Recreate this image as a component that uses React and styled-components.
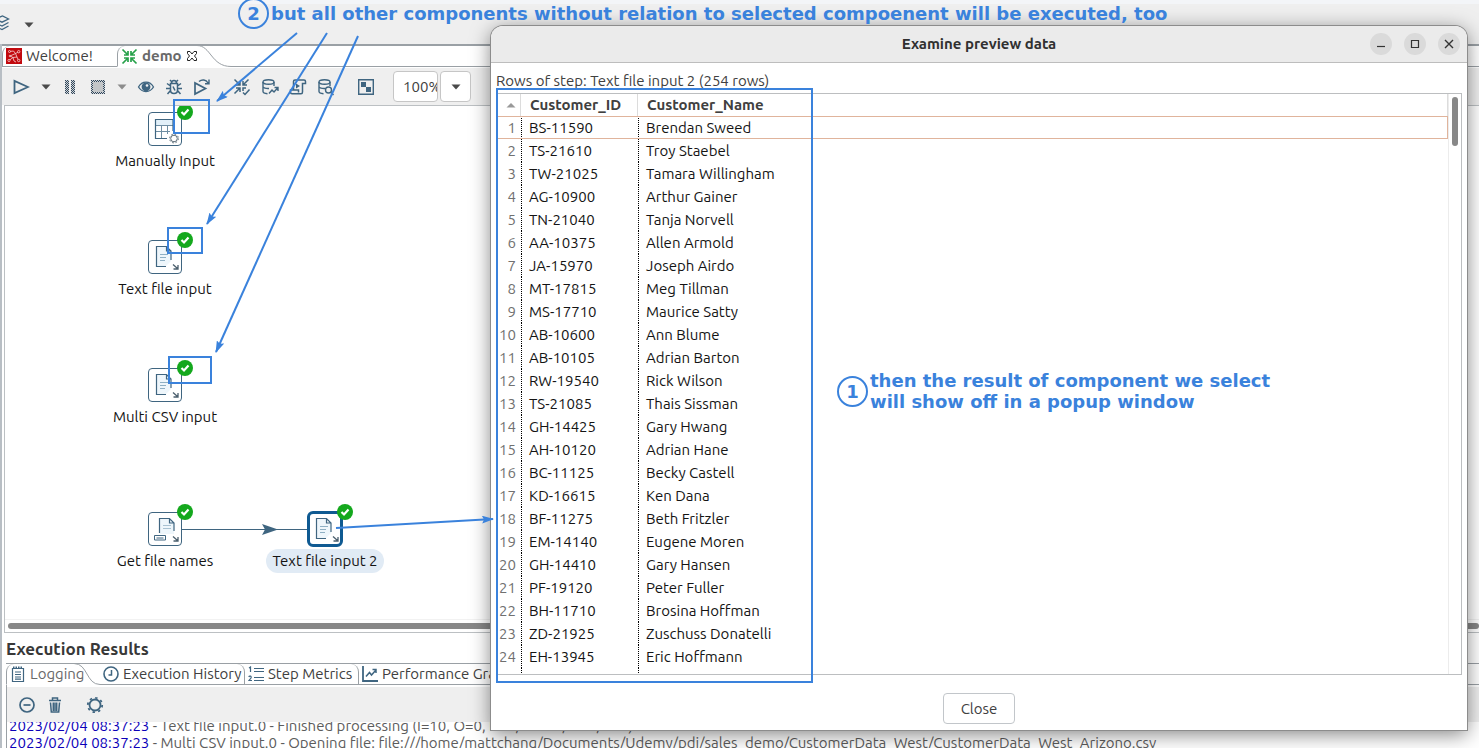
import React from 'react';
import styled, { createGlobalStyle, css } from 'styled-components';

const ink = '#3f6580';
const note = '#3a82dc';
const line = '#9aa0a5';

const GlobalStyle = createGlobalStyle`
  *, *::before, *::after { box-sizing: border-box; }
  body {
    margin: 0;
    font-family: Ubuntu, "Noto Sans", sans-serif;
    font-size: 15px;
    line-height: 20px;
    color: #404040;
    background: #efefef;
  }
  button, input { font: inherit; color: inherit; }
  button { border: 0; padding: 0; background: none; }
`;

const Page = styled.div`
  position: relative;
  display: flex;
  flex-direction: column;
  height: 100vh;
  overflow: hidden;
`;

const MainBar = styled.header`
  flex: none;
  display: flex;
  align-items: center;
  gap: 12px;
  height: 44px;
  padding-bottom: 2px;
  border-top: 4px solid #f3f5f8;
`;

const Workbench = styled.main`
  flex: 1;
  min-height: 0;
  display: flex;
  flex-direction: column;
  border-left: 2px solid #b8bec4;
  background: #fff;
`;

const TabBar = styled.div`
  flex: none;
  display: flex;
  height: ${p => (p.$small ? 22 : 23)}px;
  border-top: ${p => (p.$small ? 1 : 2)}px solid ${line};
  background: #fff;
`;

const Tab = styled.button`
  flex: none;
  display: flex;
  align-items: center;
  gap: 4px;
  width: ${p => p.$width}px;
  padding-left: 3px;
  white-space: nowrap;
  color: ${p => (p.$muted ? '#696969' : '#404040')};
  font-weight: ${p => (p.$bold ? 700 : 400)};
  border-bottom: 1px solid ${p => (p.$open ? 'transparent' : line)};
  & > svg { flex: none; }
  ${p => p.$first && css`
    border-left: 1px solid ${line};
    border-top-left-radius: 8px;
  `}
  ${p => p.$split && css`
    border-right: 1px solid ${line};
    border-top-right-radius: 8px;
  `}
`;

const TabFill = styled.div`
  flex: 1;
  border-bottom: 1px solid ${line};
`;

const Swoosh = styled.svg`
  flex: none;
  margin-top: -1px;
  overflow: visible;
`;

const Toolbar = styled.div`
  flex: none;
  display: flex;
  align-items: center;
  height: ${p => p.$height}px;
  padding-left: ${p => p.$inset}px;
  margin-top: ${p => (p.$below || 0)}px;
  background: #efefef;
`;

const ToolButton = styled.button`
  flex: none;
  display: flex;
  align-items: center;
  justify-content: center;
  width: ${p => p.$width || 28}px;
  height: 28px;
  margin-left: ${p => p.$gap || 0}px;
`;

const ZoomInput = styled.input`
  width: 45px;
  height: 31px;
  margin-left: 13px;
  padding: 0 0 0 9px;
  border: 1px solid #c6c6c6;
  border-radius: 4px;
  background: #fff;
`;

const ZoomButton = styled.button`
  display: flex;
  align-items: center;
  justify-content: center;
  width: 31px;
  height: 31px;
  margin-left: 2px;
  border: 1px solid #c6c6c6;
  border-radius: 4px;
  background: #fff;
`;

const Canvas = styled.section`
  flex: none;
  position: relative;
  height: 528px;
  margin-left: 2px;
  border: 1px solid #bcc0c3;
  border-right: 0;
  overflow: hidden;
  background: #fff;
`;

const Hop = styled.svg`
  position: absolute;
  left: 177px;
  top: 415px;
`;

const Step = styled.div`
  position: absolute;
  left: ${p => p.$x}px;
  top: ${p => p.$y}px;
  width: 120px;
  display: flex;
  flex-direction: column;
  align-items: center;
  gap: ${p => (p.$selected ? 2 : 3)}px;
`;

const StepBox = styled.div`
  position: relative;
  width: ${p => (p.$selected ? 36 : 34)}px;
  height: ${p => (p.$selected ? 36 : 34)}px;
  display: flex;
  align-items: center;
  justify-content: center;
  border: ${p => (p.$selected ? '3px solid #0f5a92' : `1px solid ${ink}`)};
  border-radius: ${p => (p.$selected ? 6 : 4)}px;
  background: #fff;
  & > svg { flex: none; }
`;

const Done = styled.svg`
  position: absolute;
  right: ${p => (p.$selected ? -13 : -12)}px;
  top: ${p => (p.$selected ? -10 : -9)}px;
`;

const StepName = styled.span`
  padding: 2px 6px;
  border-radius: 12px;
  white-space: nowrap;
  color: #141414;
  background: ${p => (p.$selected ? '#e1ebf5' : 'transparent')};
`;

const ScrollTrack = styled.div`
  position: absolute;
  left: 0;
  right: 0;
  bottom: 0;
  height: 13px;
  padding: 3px 0 3px 3px;
  border-top: 1px solid #f2f2f2;
`;

const ScrollThumb = styled.div`
  height: 6px;
  border-radius: 3px;
  background: #888;
`;

const PanelTitle = styled.h2`
  flex: none;
  margin: 0;
  padding: 6px 4px 4px;
  font-size: 17px;
  line-height: 20px;
  color: #383838;
`;

const Panel = styled.section`
  flex: 1;
  min-height: 0;
  display: flex;
  flex-direction: column;
  margin-left: 4px;
`;

const PanelBody = styled.div`
  flex: 1;
  min-height: 0;
  display: flex;
  flex-direction: column;
  border-left: 1px solid ${line};
`;

const Log = styled.div`
  flex: 1;
  min-height: 0;
  overflow: hidden;
  padding-left: 2px;
  color: #5c5c5c;
`;

const LogLines = styled.div`
  margin-top: -5px;
`;

const LogLine = styled.p`
  margin: 0;
  line-height: 17px;
  white-space: nowrap;
`;

const Stamp = styled.time`
  color: #0c00b8;
`;

const Dialog = styled.section`
  position: absolute;
  left: 491px;
  right: 12px;
  top: 26px;
  display: flex;
  flex-direction: column;
  border-radius: 12px 12px 0 0;
  background: #fff;
  box-shadow: 0 0 0 1px #8c8c8c, 0 4px 20px rgba(0, 0, 0, 0.5);
`;

const TitleBar = styled.header`
  position: relative;
  display: flex;
  align-items: center;
  justify-content: center;
  height: 37px;
  border-bottom: 1px solid #bdbdbd;
  border-radius: 12px 12px 0 0;
  background: #ebebeb;
`;

const DialogTitle = styled.h1`
  margin: 0;
  font-size: 15px;
  line-height: 20px;
  color: #303030;
`;

const WindowButtons = styled.div`
  position: absolute;
  right: 7px;
  display: flex;
  gap: 12px;
`;

const RoundButton = styled.button`
  display: flex;
  align-items: center;
  justify-content: center;
  width: 22px;
  height: 22px;
  border-radius: 50%;
  background: #dadada;
`;

const Caption = styled.p`
  margin: 0;
  padding: 8px 5px 2px;
`;

const GridFrame = styled.div`
  display: flex;
  height: 582px;
  margin: 0 5px;
  border: 1px solid #bcbec0;
  overflow: hidden;
`;

const GridScroll = styled.div`
  width: 13px;
  padding: 3px;
  border-left: 1px solid #ececec;
`;

const GridThumb = styled.div`
  width: 6px;
  height: 49px;
  border-radius: 3px;
  background: #888;
`;

const Grid = styled.table`
  flex: 1;
  width: 100%;
  height: max-content;
  table-layout: fixed;
  border-collapse: separate;
  border-spacing: 0;
`;

const HeadCell = styled.th`
  width: ${p => (p.$width ? `${p.$width}px` : 'auto')};
  height: 22px;
  padding: 0 0 0 9px;
  border-right: 1px solid #dcdcdc;
  text-align: left;
  font-weight: 700;
`;

const SortIcon = styled.svg`
  display: block;
`;

const Row = styled.tr`
  ${p => p.$current && css`
    outline: 1px solid #e0b49c;
    outline-offset: -1px;
  `}
`;

const Cell = styled.td`
  height: 23px;
  padding: 0 0 0 7px;
  border-left: 1px dotted #000;
  white-space: nowrap;
  color: #141414;
`;

const IndexCell = styled(Cell)`
  padding: 0 5px 0 0;
  border-left: 0;
  text-align: right;
  color: #707070;
`;

const Footer = styled.footer`
  display: flex;
  justify-content: center;
  padding: 18px 0 6px;
`;

const CloseButton = styled.button`
  width: 72px;
  height: 31px;
  border: 1px solid #c2c6ca;
  border-radius: 4px;
  background: #fff;
`;

const Marks = styled.svg`
  position: absolute;
  left: 0;
  top: 0;
  width: 100%;
  height: 100%;
  pointer-events: none;
`;

const Note = styled.div`
  position: absolute;
  left: ${p => p.$x}px;
  top: ${p => p.$y}px;
  display: flex;
  align-items: ${p => (p.$top ? 'flex-start' : 'center')};
  gap: 2px;
  font: 700 18px/21px "DejaVu Sans", sans-serif;
  color: ${note};
  white-space: nowrap;
`;

const NoteNumber = styled.span`
  display: flex;
  align-items: center;
  justify-content: center;
  width: 31px;
  height: 31px;
  border: 2px solid ${note};
  border-radius: 50%;
`;

const Icon = ({ size = 18, children, ...rest }) => (
  <svg width={size} height={size} viewBox={`0 0 ${size} ${size}`} fill="none" stroke={ink} strokeWidth="1.5" aria-hidden="true" {...rest}>
    {children}
  </svg>
);

const Caret = ({ fill = '#4a4a4a' }) => (
  <svg width="10" height="6" viewBox="0 0 10 6" aria-hidden="true"><path d="M0.5 0.5h9L5 5.5z" fill={fill} /></svg>
);

const LayersIcon = () => (
  <svg width="12" height="18" viewBox="6 0 12 18" fill="none" stroke={ink} strokeWidth="1.3" aria-hidden="true">
    <path d="M1 5l7.500-3 6 3-6.500 3.200zM0 8.500l8 3.500 6.500-3.500M0 12l8 3.500 6.500-3.500" />
  </svg>
);

const PlayIcon = () => <Icon><path d="M2.500 3v12L16 9z" strokeWidth="1.8" /></Icon>;

const Dither = () => (
  <defs>
    <pattern id="dither" width="2" height="2" patternUnits="userSpaceOnUse">
      <rect width="2" height="2" fill="#cdd3d8" stroke="none" />
      <path d="M0 0h1v1H0zM1 1h1v1H1z" fill="#33475a" stroke="none" />
    </pattern>
  </defs>
);

const PauseIcon = () => (
  <Icon stroke="none"><Dither /><path d="M4 2h4v14H4zM10 2h4v14h-4z" fill="url(#dither)" /></Icon>
);

const StopIcon = () => (
  <Icon stroke="none">
    <path d="M2 2h14v14H2z" fill="url(#dither)" />
    <path d="M4 4h10v10H4z" fill="#c3c6c8" />
  </Icon>
);

const EyeIcon = () => (
  <Icon>
    <path d="M1.500 9C5 2.500 13 2.500 16.500 9 13 15 5 15 1.500 9z" strokeWidth="1.300" />
    <circle cx="9" cy="8.800" r="4.400" fill={ink} stroke="none" />
    <circle cx="10" cy="7.500" r="1.300" fill="#efefef" stroke="none" />
  </Icon>
);

const BugIcon = () => (
  <Icon strokeWidth="1.5">
    <path d="M5.500 5.500h7v6.500c0 2-1.500 3.500-3.500 3.500S5.500 14 5.500 12zM6.500 5.500c0-2 1-3 2.500-3s2.500 1 2.500 3M5 2l2 2M13 2l-2 2M5.500 8L2 5.500M5.500 10.500H1M5.500 12.500L2.500 16M12.500 8L16 5.500M12.500 10.500H17M12.500 12.500l3 3.500M8 8.500l2 4" />
  </Icon>
);

const ReplayIcon = () => (
  <Icon><path d="M2 5v11L12.500 10.500z" strokeWidth="1.700" /><path d="M6 3.500c3-2.500 7-2 9 1.500M16 1.500V5.700H12" strokeWidth="1.400" /></Icon>
);

const InwardArrows = () => (
  <path d="M1.500 1.500L7 7M7 3v4H3M15.500 1.500L10 7M10 3v4h4M1.500 15.500L7 10M3 10h4v4" />
);

const VerifyIcon = () => (
  <Icon strokeWidth="1.5"><InwardArrows /><path d="M10 13v-3h3M10 14.500l2 2 4.500-5" /></Icon>
);

const Drum = () => (
  <>
    <ellipse cx="7.500" cy="4" rx="5.500" ry="2.200" />
    <path d="M2 4v9.500c0 1.200 2 2 4.500 2.200M13 4v4M2 8.500c0 1.400 3 2.200 6 2" />
  </>
);

const DbImpactIcon = () => (
  <Icon strokeWidth="1.4"><Drum /><path d="M8 15.500l3-3.500 2 2 4-4.500M13.500 9.500H17V13" /></Icon>
);

const DbSearchIcon = () => (
  <Icon strokeWidth="1.4"><Drum /><circle cx="11.500" cy="12" r="3" /><path d="M13.500 14l3 3" /></Icon>
);

const ScriptIcon = () => (
  <Icon strokeWidth="1.5">
    <path d="M4.500 12V3.500c0-1 .6-1.500 1.500-1.500h9c1 0 1.500.6 1.500 1.500V5.500h-3V14c0 1-.6 1.800-1.500 1.800H3c-1 0-1.500-.8-1.500-1.800v-2h8v2.500" />
    <path d="M7 5.500v5l4-2.500z" fill={ink} stroke="none" />
  </Icon>
);

const ResultsIcon = () => (
  <Icon strokeWidth="1.4">
    <path d="M1.700 1.700h14.600v14.600H1.700z" />
    <path d="M4 4h5v5H4zM9 9h5v5H9z" fill={ink} stroke="none" />
  </Icon>
);

const WelcomeIcon = () => (
  <svg width="16" height="16" viewBox="0 0 16 16" aria-hidden="true">
    <path d="M0 0h16v16H0z" fill="#c2090e" />
    <path d="M3.500 3.500l4-.5 2 2.500 3-1.500M4 8l5.500-2.500L11 9l1.500 3.500M4 8l3 1.500-4 3M7 9.500L11 9M7 9.500l1 3.500 2 1" fill="none" stroke="#f6d5d5" strokeWidth=".8" />
    <g fill="#c2090e" stroke="#f6d5d5" strokeWidth=".8"><circle cx="3.500" cy="3.500" r="1" /><circle cx="12.700" cy="3.700" r="1.200" /><circle cx="3" cy="12.500" r="1.100" /><circle cx="12.700" cy="12.500" r="1.200" /><circle cx="4" cy="8" r=".8" /></g>
  </svg>
);

const TransformIcon = () => (
  <svg width="17" height="17" viewBox="0 0 17 17" fill="none" stroke="#27a14a" strokeWidth="1.7" aria-hidden="true">
    <InwardArrows /><path d="M15.500 15.500L10 10M14 10h-4v4" />
  </svg>
);

const TabCloseIcon = () => (
  <svg width="12" height="12" viewBox="0 0 12 12" fill="#fff" stroke="#222" aria-hidden="true">
    <path d="M1.500 1.500h2.500l2 2.500 2-2.500h2.500v2L8.500 6l2 2.500v2H8L6 8l-2 2.500H1.500v-2L3.500 6l-2-2.500z" />
  </svg>
);

const DocCorner = () => <path d="M25 24.500l4.500 4M30 25v4h-4.500" stroke="#4b5f6d" strokeWidth="1.300" />;

const FileDrawing = () => (
  <>
    <path d="M9 7h9l5 5v9l-5 5H9z" fill="#eef6fb" stroke="none" />
    <path d="M12 14.500h8M12 17.500h6M12 20.500h5" stroke="#8fb0c4" />
    <path d="M18 26.500H8.500V6.500h10l4.500 4.500V20M18.500 6.500V11H23" strokeWidth="1.200" />
    <DocCorner />
  </>
);

const stepDrawings = {
  table: (
    <>
      <path d="M8 8h17v5H8z" fill="#e2f0f9" stroke="none" />
      <path d="M8 19.500H22M13.500 13v13M19.500 13V22M8 13.500H25" stroke="#6f8ea3" />
      <path d="M19 26.500H7.500V7.500H25V19" strokeWidth="1.200" />
      <circle cx="26" cy="26.500" r="3.300" stroke="#5b6c78" />
      <circle cx="26" cy="26.500" r="4.400" stroke="#5b6c78" strokeDasharray="1.700 1.750" />
    </>
  ),
  file: <FileDrawing />,
  names: (
    <>
      <path d="M12 7h9l5 4v11H12z" fill="#eef6fb" stroke="none" />
      <path d="M15 13.500h8M15 16.500h8" stroke="#a9c2d2" />
      <path d="M11.500 21V6.500h10l4.500 4.500V19M21.500 6.500V11H26" strokeWidth="1.200" />
      <path d="M6.500 23.500h11v4.500h-11zM8.500 26h7" fill="#fff" />
      <DocCorner />
    </>
  ),
};

const steps = [
  { name: 'Manually Input', kind: 'table', x: 100, y: 6 },
  { name: 'Text file input', kind: 'file', x: 100, y: 134 },
  { name: 'Multi CSV input', kind: 'file', x: 100, y: 262 },
  { name: 'Get file names', kind: 'names', x: 100, y: 406 },
  { name: 'Text file input 2', kind: 'file', x: 260, y: 405, selected: true },
];

const customers = [
  ['BS-11590', 'Brendan Sweed'],
  ['TS-21610', 'Troy Staebel'],
  ['TW-21025', 'Tamara Willingham'],
  ['AG-10900', 'Arthur Gainer'],
  ['TN-21040', 'Tanja Norvell'],
  ['AA-10375', 'Allen Armold'],
  ['JA-15970', 'Joseph Airdo'],
  ['MT-17815', 'Meg Tillman'],
  ['MS-17710', 'Maurice Satty'],
  ['AB-10600', 'Ann Blume'],
  ['AB-10105', 'Adrian Barton'],
  ['RW-19540', 'Rick Wilson'],
  ['TS-21085', 'Thais Sissman'],
  ['GH-14425', 'Gary Hwang'],
  ['AH-10120', 'Adrian Hane'],
  ['BC-11125', 'Becky Castell'],
  ['KD-16615', 'Ken Dana'],
  ['BF-11275', 'Beth Fritzler'],
  ['EM-14140', 'Eugene Moren'],
  ['GH-14410', 'Gary Hansen'],
  ['PF-19120', 'Peter Fuller'],
  ['BH-11710', 'Brosina Hoffman'],
  ['ZD-21925', 'Zuschuss Donatelli'],
  ['EH-13945', 'Eric Hoffmann'],
];

const tools = [
  { label: 'Run', icon: <PlayIcon /> },
  { label: 'Run options', icon: <Caret />, width: 22 },
  { label: 'Pause', icon: <PauseIcon />, width: 26 },
  { label: 'Stop', icon: <StopIcon />, gap: 1 },
  { label: 'Stop options', icon: <Caret fill="#8c8c8c" />, width: 20 },
  { label: 'Preview', icon: <EyeIcon /> },
  { label: 'Debug', icon: <BugIcon /> },
  { label: 'Replay', icon: <ReplayIcon /> },
  { label: 'Verify', icon: <VerifyIcon />, gap: 12 },
  { label: 'Impact analysis', icon: <DbImpactIcon /> },
  { label: 'Generate SQL', icon: <ScriptIcon /> },
  { label: 'Explore database', icon: <DbSearchIcon /> },
  { label: 'Show results', icon: <ResultsIcon />, gap: 12 },
];

const logLines = [
  'Text file input.0 - Finished processing (I=10, O=0, R=1, W=10, U=0, E=0)',
  'Multi CSV input.0 - Opening file: file:///home/mattchang/Documents/Udemy/pdi/sales_demo/CustomerData_West/CustomerData_West_Arizono.csv',
];

function StepNode({ step }) {
  return (
    <Step $x={step.x} $y={step.y} $selected={step.selected}>
      <StepBox $selected={step.selected}>
        <svg width="34" height="34" viewBox="0 0 34 34" fill="none" stroke={ink} aria-hidden="true">{stepDrawings[step.kind]}</svg>
        <Done $selected={step.selected} width="16" height="16" viewBox="0 0 16 16" aria-hidden="true">
          <circle cx="8" cy="8" r="8" fill="#14a81d" />
          <path d="M4.500 8l2.500 2.500L11.500 5.500" fill="none" stroke="#fff" strokeWidth="2.200" />
        </Done>
      </StepBox>
      <StepName $selected={step.selected}>{step.name}</StepName>
    </Step>
  );
}

function PreviewDialog() {
  return (
    <Dialog role="dialog" aria-labelledby="dialog-title">
      <TitleBar>
        <DialogTitle id="dialog-title">Examine preview data</DialogTitle>
        <WindowButtons>
          <RoundButton aria-label="Minimize"><svg width="10" height="10"><path d="M1 7.500h8" stroke="#333" strokeWidth="1.200" /></svg></RoundButton>
          <RoundButton aria-label="Maximize"><svg width="10" height="10"><path d="M1.500 1.500h7v7h-7z" fill="none" stroke="#333" strokeWidth="1.200" /></svg></RoundButton>
          <RoundButton aria-label="Close window"><svg width="10" height="10"><path d="M1 1l8 8M9 1L1 9" stroke="#333" strokeWidth="1.400" /></svg></RoundButton>
        </WindowButtons>
      </TitleBar>
      <Caption>Rows of step: Text file input 2 (254 rows)</Caption>
      <GridFrame>
        <Grid>
          <thead>
            <tr>
              <HeadCell $width={24} aria-label="Row"><SortIcon width="10" height="6" viewBox="0 0 10 6"><path d="M0.500 5.500h9L5 1z" fill="#999" /></SortIcon></HeadCell>
              <HeadCell $width={117}>Customer_ID</HeadCell>
              <HeadCell>Customer_Name</HeadCell>
            </tr>
          </thead>
          <tbody>
            {customers.map(([id, name], i) => (
              <Row key={id} $current={i === 0}>
                <IndexCell>{i + 1}</IndexCell>
                <Cell>{id}</Cell>
                <Cell>{name}</Cell>
              </Row>
            ))}
            <Row><IndexCell /><Cell /><Cell /></Row>
          </tbody>
        </Grid>
        <GridScroll><GridThumb /></GridScroll>
      </GridFrame>
      <Footer><CloseButton>Close</CloseButton></Footer>
    </Dialog>
  );
}

export default function App() {
  return (
    <>
      <GlobalStyle />
      <Page>
        <MainBar>
          <LayersIcon />
          <button aria-label="Perspective options"><Caret /></button>
        </MainBar>
        <Workbench>
          <TabBar>
            <Tab $first $width={115}><WelcomeIcon />Welcome!</Tab>
            <Tab $first $open $bold $muted $width={83}><TransformIcon />demo<TabCloseIcon /></Tab>
            <Swoosh width="31" height="22" viewBox="0 0 31 22" fill="none" stroke={line}>
              <path d="M-3 .5c14 0 14 21 34 21" />
            </Swoosh>
            <TabFill />
          </TabBar>
          <Toolbar $height={37} $inset={5} $below={1}>
            {tools.map(t => (
              <ToolButton key={t.label} aria-label={t.label} $width={t.width} $gap={t.gap}>{t.icon}</ToolButton>
            ))}
            <ZoomInput aria-label="Zoom" defaultValue="100%" />
            <ZoomButton aria-label="Zoom levels"><Caret /></ZoomButton>
          </Toolbar>
          <Canvas>
            <Hop width="126" height="16" viewBox="0 0 126 16" aria-hidden="true">
              <path d="M0 8.500h126" stroke={ink} />
              <path d="M80 3l16 5.500L80 14l3-5.500z" fill={ink} />
            </Hop>
            {steps.map(s => <StepNode key={s.name} step={s} />)}
            <ScrollTrack><ScrollThumb /></ScrollTrack>
          </Canvas>
          <PanelTitle>Execution Results</PanelTitle>
          <Panel>
            <TabBar $small>
              <Tab $first $open $muted $width={80}>
                <Icon size={16}><path d="M2.500 2.500h11v13h-11zM5 6h6M5 8.500h6M5 11h6M5 13.200h6" strokeWidth="1.200" /><path d="M3 1.500h10" strokeWidth="2" strokeDasharray="1.500 1" /></Icon>
                Logging
              </Tab>
              <Swoosh width="14" height="22" viewBox="0 0 14 22" fill="none" stroke={line}>
                <path d="M-12 .5c14 0 12 21 26 21" />
              </Swoosh>
              <Tab $split $width={145}>
                <Icon size={16}><circle cx="8" cy="8" r="7" strokeWidth="1.600" /><path d="M8.500 4v5H5.500" /></Icon>
                Execution History
              </Tab>
              <Tab $split $width={114}>
                <Icon size={16}><path d="M6 2.500h10M6 5.500h10M6 11.500h10M6 14.500h10M1 2l1.500-1v5M.8 11c.5-1.500 3-1 2.200 1L1 14.500h3" strokeWidth="1.200" /></Icon>
                Step Metrics
              </Tab>
              <Tab $split $width={160}>
                <Icon size={16}><path d="M1 0v15h15" strokeWidth="1.800" /><path d="M4 10.500l3.500-4 2 2.500 4.500-5M10.500 3.500H14V7" /></Icon>
                Performance Graph
              </Tab>
              <TabFill />
            </TabBar>
            <PanelBody>
              <Toolbar $height={35} $inset={6} $below={2}>
                <ToolButton aria-label="Hide options"><Icon><circle cx="9" cy="9" r="7" strokeWidth="1.700" /><path d="M5.500 9h7" strokeWidth="1.700" /></Icon></ToolButton>
                <ToolButton aria-label="Clear log"><Icon><path d="M3 4.500h12M6.500 4V2h5v2M4.500 6.500l.8 9.500h7.400l.8-9.500M7.300 6.500V15M9 6.500V15M10.700 6.500V15" strokeWidth="1.500" /></Icon></ToolButton>
                <ToolButton aria-label="Log settings" $gap={12}><Icon><circle cx="9" cy="9" r="5.500" strokeWidth="1.800" /><circle cx="9" cy="9" r="7.200" strokeWidth="1.800" strokeDasharray="2.400 3.250" /></Icon></ToolButton>
              </Toolbar>
              <Log>
                <LogLines>
                  {logLines.map(t => <LogLine key={t}><Stamp>2023/02/04 08:37:23</Stamp> - {t}</LogLine>)}
                </LogLines>
              </Log>
            </PanelBody>
          </Panel>
        </Workbench>
        <PreviewDialog />
        <Marks fill="none" stroke={note} strokeWidth="2" aria-hidden="true">
          <defs>
            <marker id="tip" viewBox="0 0 12 8" refX="11" refY="4" markerWidth="12" markerHeight="8" markerUnits="userSpaceOnUse" orient="auto">
              <path d="M0 0l12 4-12 4 2-4z" fill={note} stroke="none" />
            </marker>
          </defs>
          <path d="M174 100h35v33h-35zM168 228h34v25h-34zM169 357h42v26h-42zM497 89h315v593H497z" />
          <path d="M297 33L217 101" markerEnd="url(#tip)" />
          <path d="M327 33L207 224" markerEnd="url(#tip)" />
          <path d="M358 36L216 352" markerEnd="url(#tip)" />
          <path d="M336 528l157-9" markerEnd="url(#tip)" />
        </Marks>
        <Note $x={238} $y={-2}>
          <NoteNumber>2</NoteNumber>
          <span>but all other components without relation to selected compoenent will be executed, too</span>
        </Note>
        <Note $x={837} $y={370}>
          <NoteNumber>1</NoteNumber>
          <span>then the result of component we select<br />will show off in a popup window</span>
        </Note>
      </Page>
    </>
  );
}
